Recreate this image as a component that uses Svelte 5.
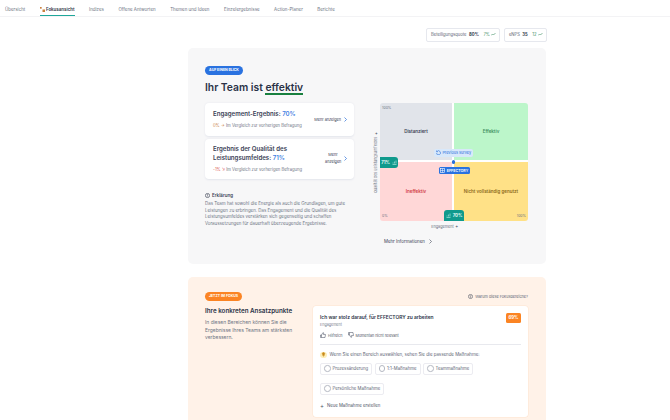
<script>
  const tabs = ['Übersicht','Fokusansicht','Indizes','Offene Antworten','Themen und Ideen','Einzelergebnisse','Action-Planer','Berichte'];
  const options = ['Prozessänderung','1:1-Maßnahme','Teammaßnahme','Persönliche Maßnahme'];
</script>

<div class="page">
  <nav class="nav">
    {#each tabs as t, i}
      <span class="tab" class:active={i === 1}>
        {#if i === 1}
          <svg class="spark" viewBox="0 0 6 6" width="5" height="5"><rect x="0" y="0" width="2" height="2" fill="#c9803f"/><rect x="3" y="3" width="3" height="3" fill="#c9803f"/></svg>
        {/if}
        {t}
      </span>
    {/each}
  </nav>

  <div class="kpis">
    <div class="kpi">Beteiligungsquote <b>80%</b> <span class="delta">7% <svg viewBox="0 0 10 6" width="5" height="3"><path d="M0 5l3-3 2 2 4-4" fill="none" stroke="#3d8f63" stroke-width="1.2"/></svg></span></div>
    <div class="kpi">eNPS <b>35</b> <span class="delta">12 <svg viewBox="0 0 10 6" width="5" height="3"><path d="M0 5l3-3 2 2 4-4" fill="none" stroke="#3d8f63" stroke-width="1.2"/></svg></span></div>
  </div>

  <section class="panel grey">
    <div class="left">
      <span class="pill blue">AUF EINEN BLICK</span>
      <h1>Ihr Team ist <span class="under">effektiv</span></h1>

      <div class="card one">
        <div class="card-main">
          <h2>Engagement-Ergebnis: <span class="score">70%</span></h2>
          <p class="cmp"><span class="up">0%</span> <span class="up">→</span> Im Vergleich zur vorherigen Befragung</p>
        </div>
        <div class="more">Mehr anzeigen</div>
        <svg class="chev" viewBox="0 0 6 10" width="3" height="5"><path d="M1 1l4 4-4 4" fill="none" stroke="#2a6fdb" stroke-width="1.4"/></svg>
      </div>

      <div class="card two">
        <div class="card-main">
          <h2>Ergebnis der Qualität des Leistungsumfeldes: <span class="score">71%</span></h2>
          <p class="cmp"><span class="down">-1%</span> <span class="down">↘</span> Im Vergleich zur vorherigen Befragung</p>
        </div>
        <div class="more narrow">Mehr anzeigen</div>
        <svg class="chev" viewBox="0 0 6 10" width="3" height="5"><path d="M1 1l4 4-4 4" fill="none" stroke="#2a6fdb" stroke-width="1.4"/></svg>
      </div>

      <div class="explain">
        <div class="ex-head">
          <svg viewBox="0 0 12 12" width="5" height="5"><circle cx="6" cy="6" r="5" fill="none" stroke="#3f4658" stroke-width="1.6"/><path d="M6 3v3.500M6 8v1" stroke="#3f4658" stroke-width="1.6"/></svg>
          Erklärung
        </div>
        <p>Das Team hat sowohl die Energie als auch die Grundlagen, um gute Leistungen zu erbringen. Das Engagement und die Qualität des Leistungsumfeldes verstärken sich gegenseitig und schaffen Voraussetzungen für dauerhaft überzeugende Ergebnisse.</p>
      </div>
    </div>

    <div class="right">
      <div class="chart-row">
        <div class="y-label">Qualität des Leistungsumfeldes ✦</div>
        <div class="matrix">
          <div class="q q-grey">Distanziert<span class="corner tl">100%</span></div>
          <div class="q q-green">Effektiv</div>
          <div class="q q-red">Ineffektiv<span class="corner bl">0%</span></div>
          <div class="q q-yellow">Nicht vollständig genutzt<span class="corner br">100%</span></div>

          <span class="badge y-badge">71% <svg viewBox="0 0 10 10" width="5" height="5"><path d="M1 9h8M2 7V5M5 7V3M8 7V1" stroke="#bdeee5" stroke-width="1.2" fill="none"/></svg></span>
          <span class="badge x-badge"><svg viewBox="0 0 10 10" width="5" height="5"><path d="M1 9h8M2 7V5M5 7V3M8 7V1" stroke="#bdeee5" stroke-width="1.2" fill="none"/></svg> 70%</span>
          <span class="prev"><svg viewBox="0 0 10 10" width="5" height="5"><path d="M2 3a4 4 0 1 1-1 3M1 1v2.500h2.500" fill="none" stroke="#2a6fdb" stroke-width="1.2"/></svg> Previous survey</span>
          <span class="dot"></span>
          <span class="eff"><svg viewBox="0 0 10 10" width="5" height="5"><rect x="1" y="1" width="8" height="8" fill="none" stroke="#fff" stroke-width="1.2"/><path d="M1 5h8M5 1v8" stroke="#fff"/></svg> EFFECTORY</span>
        </div>
      </div>
      <div class="x-label">Engagement ✦</div>
      <div class="info">Mehr Informationen <svg viewBox="0 0 6 10" width="3" height="5"><path d="M1 1l4 4-4 4" fill="none" stroke="#3f4658" stroke-width="1.2"/></svg></div>
    </div>
  </section>

  <section class="panel peach">
    <div class="left2">
      <span class="pill orange">JETZT IM FOKUS</span>
      <h3>Ihre konkreten Ansatzpunkte</h3>
      <p class="lead">In diesen Bereichen können Sie die Ergebnisse Ihres Teams am stärksten verbessern.</p>
    </div>
    <div class="right2">
      <div class="why">
        <svg viewBox="0 0 12 12" width="5" height="5"><circle cx="6" cy="6" r="5" fill="none" stroke="#3f4658" stroke-width="1.3"/><path d="M4 4.500h4M6 6v3" stroke="#3f4658" stroke-width="1.3"/></svg>
        Warum diese Fokusbereiche?
      </div>
      <div class="focus-card">
        <div class="fc-top">
          <div>
            <h4>Ich war stolz darauf, für EFFECTORY zu arbeiten</h4>
            <div class="tag">Engagement</div>
          </div>
          <span class="pct">69%</span>
        </div>
        <div class="votes">
          <span><svg viewBox="0 0 12 12" width="6" height="6"><path d="M1 6h2v5H1zM3 6l3-5 1.500 1L7 5h4l-1 6H3" fill="none" stroke="#3f4658"/></svg> Hilfreich</span>
          <span><svg viewBox="0 0 12 12" width="6" height="6"><path d="M1 6h2V1H1zM3 6l3 5 1.500-1L7 7h4l-1-6H3" fill="none" stroke="#3f4658"/></svg> Momentan nicht relevant</span>
        </div>
        <hr />
        <div class="hint">
          <span class="bulb"><svg viewBox="0 0 10 10" width="5" height="5"><path d="M5 1a2.500 2.500 0 0 1 1.500 4.500V7h-3V5.500A2.500 2.500 0 0 1 5 1zM4 8.500h2" fill="#c98a1a" stroke="#c98a1a"/></svg></span>
          Wenn Sie einen Bereich auswählen, sehen Sie die passende Maßnahme:
        </div>
        <div class="opts">
          {#each options as o}
            <span class="opt"><i></i>{o}</span>
          {/each}
        </div>
        <div class="add"><span class="plus">+</span> Neue Maßnahme erstellen</div>
      </div>
    </div>
  </section>
</div>

<style>
  :global(body) { margin: 0; background: #fff; overflow: hidden; }
  .page {
    width: 670px; height: 420px; overflow: hidden;
    font-family: Inter, "Liberation Sans", sans-serif;
    color: #2f3648;
    display: flex; flex-direction: column; align-items: flex-start;
  }
  .nav {
    width: 100%; height: 17px; box-sizing: border-box; flex-shrink: 0;
    display: flex; padding-left: 5px; gap: 14.500px;
    border-bottom: 1px solid #f3f3f5;
    font-size: 4.450px; color: #6d7483;
  }
  .tab { height: 16px; box-sizing: border-box; padding-top: 6.500px; white-space: nowrap; }
  .tab.active { color: #2f3648; border-bottom: 1px solid #1fa79a; font-weight: 600; }
  .spark { vertical-align: -1px; }

  .kpis { align-self: flex-end; flex-shrink: 0; display: flex; gap: 4px; margin: 11px 123px 6.500px 0; height: 13.500px; }
  .kpi {
    display: flex; align-items: center; gap: 2.500px; padding: 0 3.500px; box-sizing: border-box;
    border: 1px solid #e6e8ee; border-radius: 2px; background: #fff;
    font-size: 4.200px; color: #5e6575; white-space: nowrap;
  }
  .kpi b { color: #2f3648; }
  .delta { color: #3d8f63; display: inline-flex; gap: 1px; align-items: center; margin-left: 2px; }

  .panel { width: 358px; margin-left: 188px; box-sizing: border-box; border-radius: 5px; display: flex; flex-shrink: 0; }
  .grey { background: #f7f7f8; height: 216px; padding: 17.500px 18px 0 17px; gap: 0; }
  .peach { background: #fff2e8; height: 160px; margin-top: 13px; padding: 15px 18px 0 17px; gap: 16px; }

  .left { width: 149px; flex-shrink: 0; }
  .pill {
    display: block; color: #fff; font-weight: 700; font-size: 3.500px;
    border-radius: 5px; line-height: 9px; white-space: nowrap; text-align: center;
  }
  .blue { background: #2a72e0; width: 38px; }
  .orange { background: #fb8423; width: 37px; }

  h1 { margin: 5px 0 9px; font-size: 10.300px; font-weight: 600; line-height: 14px; color: #2b3247; white-space: nowrap; }
  .under { border-bottom: 2px solid #19803f; }

  .card {
    background: #fff; border-radius: 4px; box-shadow: 0 0.500px 2px #e3e5ec;
    display: flex; align-items: center; padding: 0 7px 0 8px; margin-bottom: 3px; box-sizing: border-box;
  }
  .card.one { height: 33px; }
  .card.two { height: 40px; }
  .card-main { flex: 1; min-width: 0; }
  .card h2 { margin: 0 0 3.500px; font-size: 6.100px; line-height: 8.800px; font-weight: 600; color: #3a4155; }
  .score { color: #3f7fe3; }
  .cmp { margin: 0; font-size: 4.150px; color: #6d7483; white-space: nowrap; }
  .up { color: #c9803f; }
  .down { color: #d9534f; }
  .more { font-size: 3.800px; color: #3a4155; white-space: nowrap; margin-right: 3px; }
  .more.narrow { width: 16px; flex-shrink: 0; white-space: normal; text-align: center; line-height: 6.500px; margin-left: 6px; }
  .two h2 { width: 100px; }

  .explain { margin-top: 14px; }
  .ex-head { display: flex; align-items: center; gap: 2px; font-size: 4.500px; font-weight: 600; margin-bottom: 3.500px; color: #3a4155; }
  .explain p { margin: 0; font-size: 4.430px; line-height: 6.650px; color: #6d7483; width: 146px; }

  .right { flex: 1; display: flex; flex-direction: column; margin-top: 37.500px; }
  .chart-row { display: flex; align-items: stretch; justify-content: flex-end; }
  .y-label {
    writing-mode: vertical-rl; transform: rotate(180deg); font-size: 3.800px; color: #6d7483;
    text-align: center; width: 6px; margin-right: 1px; white-space: nowrap;
  }
  .matrix {
    position: relative; width: 148px; height: 118px; border-radius: 3px; overflow: hidden;
    display: grid; grid-template-columns: 73px 75px; grid-template-rows: 58px 60px;
  }
  .q { display: flex; align-items: center; justify-content: center; font-size: 4.500px; font-weight: 600; position: relative; }
  .q-grey { background: #e1e4ea; color: #3a4155; border-right: 0.500px solid #fff; border-bottom: 0.500px solid #fff; }
  .q-green { background: #bcf6ca; color: #3d8f5f; border-left: 0.500px solid #fff; border-bottom: 0.500px solid #fff; }
  .q-red { background: #ffd7d7; color: #d13c46; border-right: 0.500px solid #fff; border-top: 0.500px solid #fff; }
  .q-yellow { background: #ffe187; color: #8c6a1a; border-left: 0.500px solid #fff; border-top: 0.500px solid #fff; }
  .corner { position: absolute; font-size: 3.500px; font-weight: 400; color: #6d7483; }
  .tl { left: 2px; top: 3px; }
  .bl { left: 2px; bottom: 3px; }
  .br { right: 2px; bottom: 3px; }

  .badge {
    position: absolute; background: #0f9a8d; color: #e6fbf7; font-size: 4.300px; font-weight: 700;
    display: flex; align-items: center; justify-content: center; gap: 2px; height: 11px;
  }
  .y-badge { left: 0; top: 54px; width: 18px; border-radius: 0 3px 3px 0; }
  .x-badge { left: 64px; bottom: 0; width: 20px; border-radius: 3px 3px 0 0; }
  .prev {
    position: absolute; left: 54px; top: 46px; width: 39px; height: 7.500px; border-radius: 2px;
    background: #d8e8fa; color: #2a6fdb; font-size: 3.800px;
    display: flex; align-items: center; justify-content: center; gap: 1.500px; white-space: nowrap;
  }
  .dot { position: absolute; left: 71.500px; top: 57px; width: 3.500px; height: 3.500px; border-radius: 50%; background: #2a6fdb; }
  .eff {
    position: absolute; left: 59px; top: 63.500px; width: 30.500px; height: 7.500px; border-radius: 1.500px;
    background: #2a72e0; color: #fff; font-size: 3.700px; font-weight: 600;
    display: flex; align-items: center; justify-content: center; gap: 1.500px; white-space: nowrap;
  }

  .x-label { margin: 3px 0 0 7px; text-align: center; font-size: 3.800px; color: #6d7483; }
  .info { margin: 10px 0 0 30px; font-size: 4.400px; color: #3a4155; display: flex; gap: 4px; align-items: center; }

  .left2 { width: 92px; flex-shrink: 0; }
  .left2 h3 { margin: 6px 0 4px; font-size: 6.250px; line-height: 8px; font-weight: 600; color: #2b3247; white-space: nowrap; }
  .lead { margin: 0; font-size: 4.950px; line-height: 7.700px; color: #6d7483; width: 92px; }

  .right2 { flex: 1; min-width: 0; }
  .why { display: flex; justify-content: flex-end; align-items: center; gap: 2px; font-size: 3.800px; color: #5e6575; height: 8px; margin-bottom: 6px; white-space: nowrap; }
  .focus-card { background: #fff; border-radius: 3px; box-shadow: 0 0 0 0.500px #fde3cf; padding: 7px 7px 0 7px; height: 111px; box-sizing: border-box; }
  .fc-top { display: flex; justify-content: space-between; align-items: flex-start; }
  .fc-top h4 { margin: 1px 0 2px; font-size: 4.900px; font-weight: 600; color: #2b3247; white-space: nowrap; }
  .tag { font-size: 3.700px; color: #7b8291; }
  .pct { background: #fb8423; color: #fff; font-size: 4.300px; font-weight: 700; border-radius: 1.500px; width: 15px; height: 10px; line-height: 10px; text-align: center; }
  .votes { display: flex; gap: 5px; font-size: 3.700px; color: #4c5364; margin-top: 5px; align-items: center; }
  .votes span { display: flex; align-items: center; gap: 2px; white-space: nowrap; }
  hr { border: 0; border-top: 0.500px solid #e8e9ee; margin: 6px 0 6.500px; }
  .hint { display: flex; align-items: center; gap: 3px; font-size: 4.400px; color: #5e6575; white-space: nowrap; }
  .bulb { width: 6.500px; height: 6.500px; border-radius: 50%; background: #fdeeb8; display: flex; align-items: center; justify-content: center; }
  .opts { display: flex; flex-wrap: wrap; gap: 8px 2.500px; margin-top: 4.500px; }
  .opt { display: inline-flex; align-items: center; gap: 2px; height: 12px; padding: 0 3px; border: 0.500px solid #ececf1; border-radius: 2px; background: #fff; font-size: 4.300px; color: #5e6575; white-space: nowrap; box-sizing: border-box; }
  .opt i { width: 4.500px; height: 4.500px; border: 0.500px solid #b4b8c2; border-radius: 50%; }
  .add { margin-top: 8px; font-size: 4.300px; color: #4c5364; display: flex; gap: 3px; align-items: center; }
  .plus { font-size: 6px; line-height: 6px; }
</style>
